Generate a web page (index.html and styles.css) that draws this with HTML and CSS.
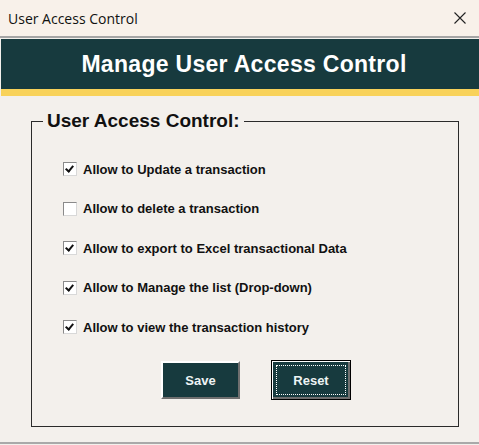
FILE: index.html
```html
<!DOCTYPE html>
<html lang="en">

<head>
    <title>User Access Control</title>
    <link rel="stylesheet" href="styles.css">
</head>

<body>
    <div class="window">
        <div class="titlebar">
            <span class="title">User Access Control</span>
            <svg class="close" width="12" height="12" viewBox="0 0 12 12">
                <path d="M0.5 0.5 L11.5 11.5 M11.5 0.5 L0.5 11.5" stroke="#222" stroke-width="1.1" fill="none" />
            </svg>
        </div>

        <div class="header">
            <h1>Manage User Access Control</h1>
        </div>
        <div class="stripe"></div>

        <fieldset class="frame">
            <legend>User Access Control:</legend>

            <div class="options">
                <div class="option"><span class="box checked"></span>Allow to Update a transaction</div>
                <div class="option"><span class="box"></span>Allow to delete a transaction</div>
                <div class="option"><span class="box checked"></span>Allow to export to Excel transactional Data</div>
                <div class="option"><span class="box checked"></span>Allow to Manage the list (Drop-down)</div>
                <div class="option"><span class="box checked"></span>Allow to view the transaction history</div>
            </div>

            <div class="buttons">
                <button type="button" class="btn">Save</button>
                <button type="button" class="btn focused"><span>Reset</span></button>
            </div>
        </fieldset>

        <div class="bottom-line"></div>
    </div>
</body>

</html>
```

FILE: styles.css
```css
body {
    margin: 0;
    padding: 0;
    background-color: #f3f0ec;
    font-family: "Liberation Sans", Arial, sans-serif;
}

.window {
    width: 479px;
    height: 445px;
    overflow: hidden;
}

.titlebar {
    height: 36px;
    background-color: #f8f1ea;
    border-bottom: 2px solid #a5a5a5;
    display: flex;
    align-items: center;
    justify-content: space-between;
    padding: 0 13px 0 8px;
}

.title {
    font-family: "Open Sans", "Noto Sans", sans-serif;
    font-size: 14px;
    color: #111;
    margin-top: 1px;
}

.close {
    margin-bottom: 1px;
}

.header {
    margin-top: 1px;
    margin-left: 1px;
    height: 50px;
    background-color: #173a3e;
    display: flex;
    align-items: center;
    justify-content: center;
}

.header h1 {
    margin: 0 0 0 8px;
    color: #fff;
    font-size: 23px;
    font-weight: bold;
    letter-spacing: 0.3px;
}

.stripe {
    margin-left: 1px;
    height: 7px;
    background-color: #f8d25a;
}

.frame {
    box-sizing: border-box;
    width: 428px;
    margin: 14px 0 0 31px;
    padding: 29px 0 26px 11px;
    border: 1px solid #2a2a2a;
}

.frame legend {
    font-size: 19px;
    font-weight: bold;
    color: #111;
    padding: 0 4px;
    line-height: 22px;
}

.options {
    display: flex;
    flex-direction: column;
    gap: 23.5px;
    padding-left: 20px;
}

.option {
    display: flex;
    align-items: center;
    height: 16px;
    font-size: 13px;
    font-weight: bold;
    color: #111;
}

.box {
    box-sizing: border-box;
    width: 14px;
    height: 14px;
    margin-right: 6px;
    background-color: #fff;
    border: 1px solid #8a8a8a;
    border-right-color: #d8d8d8;
    border-bottom-color: #d8d8d8;
    position: relative;
}

.box.checked::after {
    content: "";
    position: absolute;
    left: 3px;
    top: 1px;
    width: 3px;
    height: 6px;
    border-right: 2px solid #111;
    border-bottom: 2px solid #111;
    transform: rotate(40deg);
}

.buttons {
    display: flex;
    align-items: center;
    gap: 31px;
    margin-top: 25px;
    padding-left: 118px;
}

.btn {
    box-sizing: border-box;
    width: 79px;
    height: 38px;
    background-color: #173a3e;
    color: #eef4f4;
    font-family: "Liberation Sans", Arial, sans-serif;
    font-size: 13px;
    font-weight: bold;
    border: 2px solid;
    border-color: #fff #6f6f6f #6f6f6f #fff;
    padding: 0;
    cursor: pointer;
}

.btn.focused {
    width: 80px;
    height: 40px;
    border: 1px solid #000;
    box-shadow: inset 1px 1px 0 #fff, inset -2px -2px 0 #6f6f6f;
    display: flex;
    align-items: center;
    justify-content: center;
}

.btn.focused span {
    box-sizing: border-box;
    width: calc(100% - 8px);
    height: calc(100% - 8px);
    border: 1px dotted #fff;
    display: flex;
    align-items: center;
    justify-content: center;
}

.bottom-line {
    margin-top: 15px;
    height: 2px;
    background-color: #a9a9a9;
}
```
